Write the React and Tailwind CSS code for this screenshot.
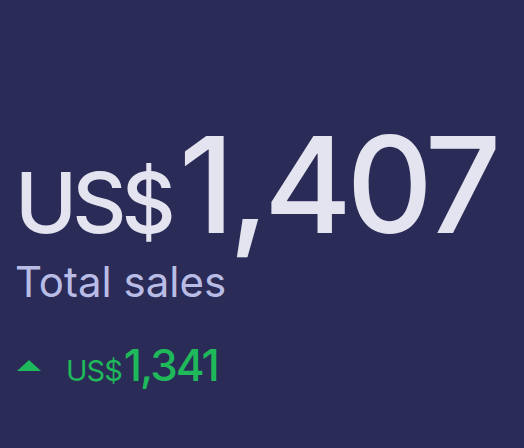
import React from "react";

function App() {
  return (
    <div className="w-[524px] h-[448px] bg-[#2a2b57] overflow-hidden font-['Inter',sans-serif]">
      <div className="pt-[117px] pl-[15px]">
        {/* Headline total */}
        <div className="flex items-baseline text-[#e3e4ef] leading-none font-medium">
          <span className="text-[84px] tracking-[-5px]">US$</span>
          <span className="text-[134px] tracking-[-5.5px] ml-[8px]">1,407</span>
        </div>
        <div className="text-[42px] text-[#b9bde6] leading-none mt-[10px]">Total sales</div>

        {/* Change vs previous period */}
        <div className="flex items-center mt-[40px]">
          <svg width="26" height="13" viewBox="0 0 26 13" className="mr-[24px] ml-[1px]">
            <path d="M13 1 L25 12 L1 12 Z" fill="#1fb85a" />
          </svg>
          <div className="flex items-baseline text-[#1fb85a] leading-none">
            <span className="text-[29px] tracking-[-1px]">US$</span>
            <span className="text-[44px] font-medium tracking-[-2px] ml-[2px]">1,341</span>
          </div>
        </div>
      </div>
    </div>
  );
}

export default App;
